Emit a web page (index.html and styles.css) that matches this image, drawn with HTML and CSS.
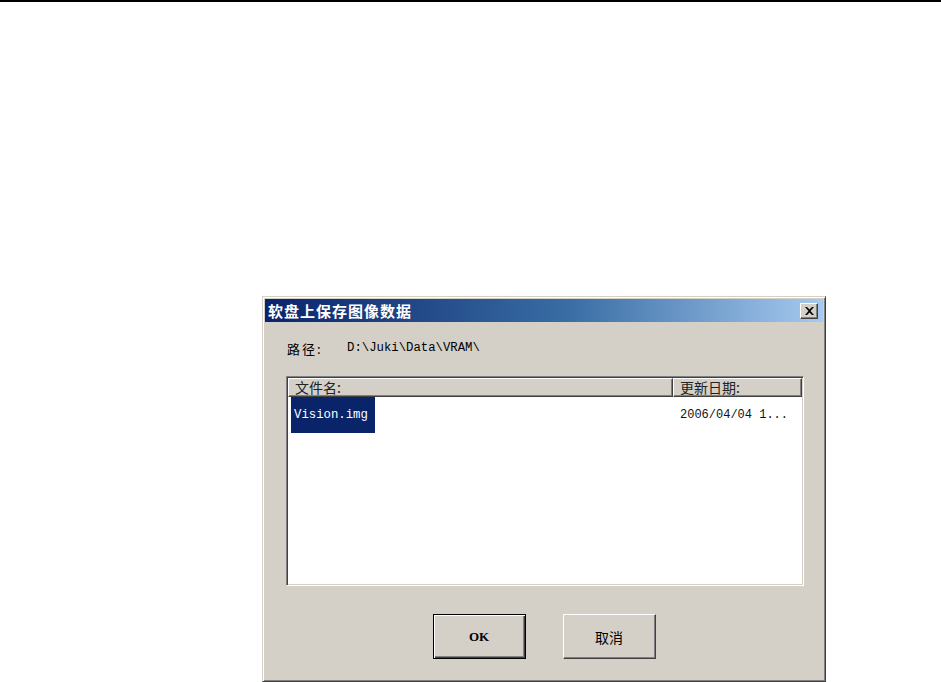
FILE: index.html
```html
<!DOCTYPE html>
<html lang="zh-CN">
<head>
  <meta charset="UTF-8">
  <title>软盘上保存图像数据</title>
  <link rel="stylesheet" href="styles.css">
</head>
<body>
  <div class="top-rule"></div>
  <div class="page">
    <div class="dialog">
      <div class="titlebar">
        <span class="title">软盘上保存图像数据</span>
        <button class="close-btn" aria-label="关闭">
          <svg width="9" height="8" viewBox="0 0 9 8">
            <path d="M0 0h2l2.5 2.5L7 0h2L5.5 4 9 8H7L4.5 5.5 2 8H0l3.5-4z" fill="#000"/>
          </svg>
        </button>
      </div>

      <div class="content">
        <div class="path-row">
          <span class="path-label">路径:</span>
          <span class="path-value">D:\Juki\Data\VRAM\</span>
        </div>

        <div class="listview">
          <div class="list-header">
            <div class="col col-name">文件名:</div>
            <div class="col col-date">更新日期:</div>
          </div>
          <div class="list-body">
            <div class="list-row">
              <span class="item-name selected">Vision.img</span>
              <span class="item-date">2006/04/04 1...</span>
            </div>
          </div>
        </div>

        <div class="buttons">
          <button class="btn btn-default">OK</button>
          <button class="btn">取消</button>
        </div>
      </div>
    </div>
  </div>
</body>
</html>
```

FILE: styles.css
```css
body {
  margin: 0;
  background: #fff;
  font-family: "Noto Sans CJK SC", "Liberation Sans", sans-serif;
  color: #000;
}

.top-rule {
  height: 2px;
  background: #000;
}

.page {
  padding: 294px 0 0 262px;
}

.dialog {
  width: 564px;
  height: 386px;
  box-sizing: border-box;
  background: #d4d0c8;
  border: 1px solid;
  border-color: #d4d0c8 #404040 #404040 #d4d0c8;
  box-shadow: inset 1px 1px 0 #fff, inset -1px -1px 0 #808080;
  padding: 2px;
  overflow: hidden;
}

.titlebar {
  height: 23px;
  display: flex;
  align-items: center;
  justify-content: space-between;
  background: linear-gradient(to right, #0a246a 0%, #3a6ea5 55%, #a6caf0 100%);
  padding: 0 3px 0 3px;
}

.title {
  color: #fff;
  font-weight: bold;
  font-size: 15px;
  letter-spacing: 1px;
  line-height: 23px;
}

.close-btn {
  width: 18px;
  height: 16px;
  padding: 0;
  margin-right: 2px;
  display: flex;
  align-items: center;
  justify-content: center;
  background: #d4d0c8;
  border: 1px solid;
  border-color: #fff #404040 #404040 #fff;
  box-shadow: inset -1px -1px 0 #808080;
}

.content {
  padding: 0 20px 0 21px;
}

.path-row {
  display: flex;
  align-items: center;
  height: 20px;
  margin-top: 16px;
  font-size: 13px;
}

.path-label {
  width: 60px;
  padding-left: 1px;
  letter-spacing: 2px;
}

.path-value {
  font-family: "Liberation Mono", monospace;
  font-size: 12.3px;
}

.listview {
  margin-top: 18px;
  width: 518px;
  height: 210px;
  box-sizing: border-box;
  border: 1px solid;
  border-color: #808080 #fff #fff #808080;
  box-shadow: inset 1px 1px 0 #404040, inset -1px -1px 0 #d4d0c8;
  background: #fff;
  padding: 1px;
}

.list-header {
  display: flex;
  height: 19px;
}

.col {
  box-sizing: border-box;
  background: #d4d0c8;
  border: 1px solid;
  border-color: #fff #404040 #404040 #fff;
  box-shadow: inset -1px -1px 0 #808080;
  font-size: 14px;
  line-height: 16px;
  padding-left: 6px;
  color: #222;
}

.col-name {
  width: 385px;
}

.col-date {
  width: 129px;
}

.list-body {
  padding: 0 0 0 3px;
}

.list-row {
  display: flex;
  align-items: center;
}

.item-name {
  width: 84px;
  height: 36px;
  line-height: 36px;
  font-family: "Liberation Mono", monospace;
  font-size: 12.3px;
  padding-left: 3px;
  box-sizing: border-box;
}

.selected {
  background: #0a246a;
  color: #fff;
}

.item-date {
  margin-left: 305px;
  font-family: "Liberation Mono", monospace;
  font-size: 12px;
  color: #111;
}

.buttons {
  display: flex;
  justify-content: center;
  gap: 37px;
  margin-top: 28px;
  padding-right: 1px;
}

.btn {
  width: 93px;
  height: 45px;
  box-sizing: border-box;
  background: #d4d0c8;
  border: 1px solid;
  border-color: #fff #404040 #404040 #fff;
  box-shadow: inset -1px -1px 0 #808080;
  font-family: "Noto Sans CJK SC", sans-serif;
  font-size: 14px;
  color: #000;
  padding: 0;
}

.btn-default {
  border: 1px solid #000;
  box-shadow: inset 1px 1px 0 #fff, inset -1px -1px 0 #404040, inset -2px -2px 0 #808080;
  font-family: "Liberation Serif", serif;
  font-weight: bold;
  font-size: 13px;
}
```
